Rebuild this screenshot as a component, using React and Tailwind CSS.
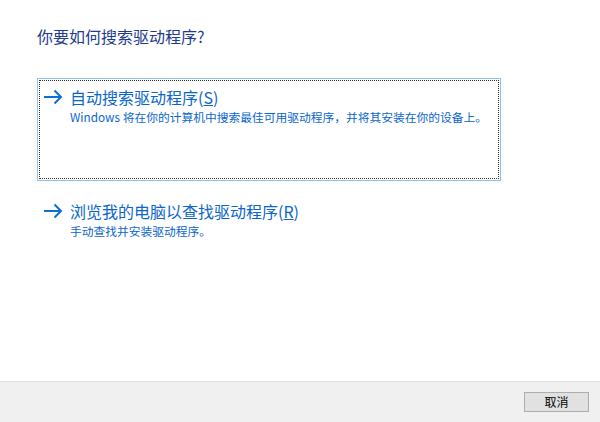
import React from 'react';

const font = { fontFamily: '"Noto Sans CJK SC", "Noto Sans", sans-serif' };

function Arrow() {
  return (
    <svg width="20" height="16" viewBox="0 0 20 16" fill="none" className="shrink-0">
      <path d="M1 8H18M11.5 1.5L18 8L11.5 14.5" stroke="#0a6fd6" strokeWidth="2" />
    </svg>
  );
}

function CommandLink({ title, hotkey, desc }) {
  return (
    <div className="flex flex-col">
      <div className="flex items-center h-[20px] text-[16px] leading-[20px] text-[#0a66cc]">
        <span className="w-[27px] flex"><Arrow /></span>
        <span>
          {title}(<span className="underline underline-offset-1">{hotkey}</span>)
        </span>
      </div>
      <div className="mt-[2px] pl-[27px] text-[11.75px] leading-[16px] text-[#0a66cc]">{desc}</div>
    </div>
  );
}

export default function App() {
  return (
    <div className="w-[600px] h-[422px] flex flex-col bg-white" style={font}>
      <div className="flex-1 pl-[37px] pt-[24px]">
        <h1 className="text-[16px] leading-[24px] text-[#1e3a8f] font-normal">你要如何搜索驱动程序?</h1>

        {/* focused option */}
        <div className="mt-[30px] w-[464px] h-[103px] border border-[#8ec3f0] p-px">
          <div className="h-full border border-dotted border-[#333] pl-[3px] pt-[6px]">
            <CommandLink
              title="自动搜索驱动程序"
              hotkey="S"
              desc="Windows 将在你的计算机中搜索最佳可用驱动程序，并将其安装在你的设备上。"
            />
          </div>
        </div>

        <div className="mt-[20px] pl-[6px]">
          <CommandLink
            title="浏览我的电脑以查找驱动程序"
            hotkey="R"
            desc="手动查找并安装驱动程序。"
          />
        </div>
      </div>

      <div className="h-[41px] bg-[#f0f0f0] border-t border-[#dfdfdf] flex justify-end items-start pt-[10px] pr-[11px]">
        <button className="w-[65px] h-[20px] bg-[#e1e1e1] border border-[#adadad] text-[12px] leading-[18px] text-black">
          取消
        </button>
      </div>
    </div>
  );
}
